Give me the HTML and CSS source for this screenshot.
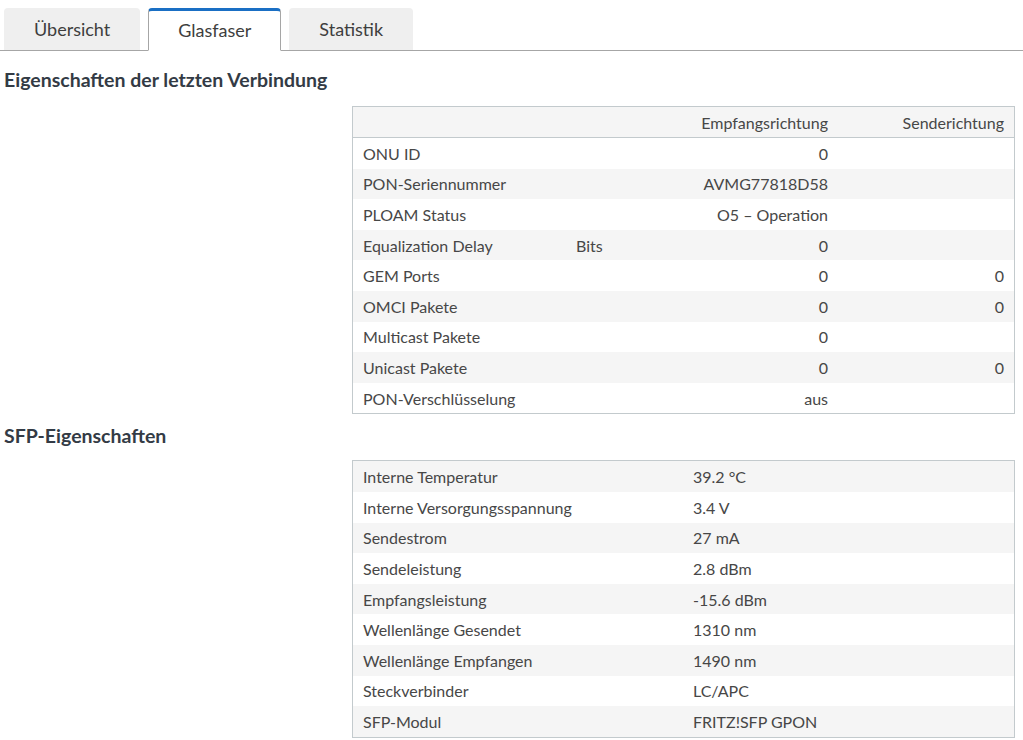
FILE: index.html
```html
<!DOCTYPE html>
<html>
	<head>
		<title>Glasfaser</title>
		<meta name="viewport" content="width=device-width, initial-scale=1">
		<link rel="stylesheet" href="styles.css">
	</head>
	<body>
		<nav class="tabs">
			<a class="tab">Übersicht</a>
			<a class="tab active">Glasfaser</a>
			<a class="tab">Statistik</a>
		</nav>
		<main>
			<h2>Eigenschaften der letzten Verbindung</h2>
			<table class="info pon">
				<thead>
					<tr>
						<th class="label"></th>
						<th class="unit"></th>
						<th class="num">Empfangsrichtung</th>
						<th class="num">Senderichtung</th>
					</tr>
				</thead>
				<tbody>
					<tr><td>ONU ID</td><td></td><td class="num">0</td><td class="num"></td></tr>
					<tr><td>PON-Seriennummer</td><td></td><td class="num">AVMG77818D58</td><td class="num"></td></tr>
					<tr><td>PLOAM Status</td><td></td><td class="num">O5 – Operation</td><td class="num"></td></tr>
					<tr><td>Equalization Delay</td><td>Bits</td><td class="num">0</td><td class="num"></td></tr>
					<tr><td>GEM Ports</td><td></td><td class="num">0</td><td class="num">0</td></tr>
					<tr><td>OMCI Pakete</td><td></td><td class="num">0</td><td class="num">0</td></tr>
					<tr><td>Multicast Pakete</td><td></td><td class="num">0</td><td class="num"></td></tr>
					<tr><td>Unicast Pakete</td><td></td><td class="num">0</td><td class="num">0</td></tr>
					<tr><td>PON-Verschlüsselung</td><td></td><td class="num">aus</td><td class="num"></td></tr>
				</tbody>
			</table>

			<h2>SFP-Eigenschaften</h2>
			<table class="info sfp">
				<tbody>
					<tr><td class="label">Interne Temperatur</td><td>39.2 °C</td></tr>
					<tr><td class="label">Interne Versorgungsspannung</td><td>3.4 V</td></tr>
					<tr><td class="label">Sendestrom</td><td>27 mA</td></tr>
					<tr><td class="label">Sendeleistung</td><td>2.8 dBm</td></tr>
					<tr><td class="label">Empfangsleistung</td><td>-15.6 dBm</td></tr>
					<tr><td class="label">Wellenlänge Gesendet</td><td>1310 nm</td></tr>
					<tr><td class="label">Wellenlänge Empfangen</td><td>1490 nm</td></tr>
					<tr><td class="label">Steckverbinder</td><td>LC/APC</td></tr>
					<tr><td class="label">SFP-Modul</td><td>FRITZ!SFP GPON</td></tr>
				</tbody>
			</table>
		</main>
	</body>
</html>
```

FILE: styles.css
```css
html, body {
	margin: 0;
	padding: 0;
	background: #fff;
	font-family: "Lato", "Liberation Sans", sans-serif;
	color: #474747;
}
.tabs {
	display: flex;
	gap: 8px;
	padding: 8px 4px 0;
	border-bottom: 1px solid #a6a6a6;
}
.tab {
	display: block;
	height: 43px;
	line-height: 43px;
	padding: 0 30px;
	box-sizing: border-box;
	margin-bottom: -1px;
	font-size: 18px;
	color: #3e3e3e;
	background: #efefef;
	border-radius: 4px 4px 0 0;
	border-bottom: 1px solid #a6a6a6;
	cursor: pointer;
}
.tab.active {
	background: #fff;
	border: 1px solid #a6a6a6;
	border-top: 3px solid #1a6fc4;
	border-bottom: 1px solid #fff;
	line-height: 38px;
	padding: 0 29px;
}
main {
	padding: 7px 8px 0 4px;
}
h2 {
	margin: 0;
	padding: 11px 0 15px;
	font-size: 19.5px;
	font-weight: bold;
	color: #333b45;
	line-height: 22px;
}
.info + h2 {
	padding-bottom: 13px;
}
.info {
	margin-left: auto;
	width: 663px;
	border-collapse: collapse;
	border: 1px solid #c3cacd;
	font-size: 16px;
}
.info th, .info td {
	height: 30.6px;
	padding: 0 10px;
	text-align: left;
	font-weight: normal;
	white-space: nowrap;
}
.info thead th {
	background: #f5f5f5;
	border-bottom: 1px solid #c3cacd;
	height: 30px;
}
.info .num {
	text-align: right;
}
.pon tbody tr:nth-child(even) {
	background: #f5f5f5;
}
.pon .label {
	width: 193px;
}
.pon .unit {
	width: 75px;
}
.pon thead th:nth-child(3) {
	width: 157px;
}
.sfp tbody tr:nth-child(odd) {
	background: #f5f5f5;
}
.sfp .label {
	width: 310px;
}
```
